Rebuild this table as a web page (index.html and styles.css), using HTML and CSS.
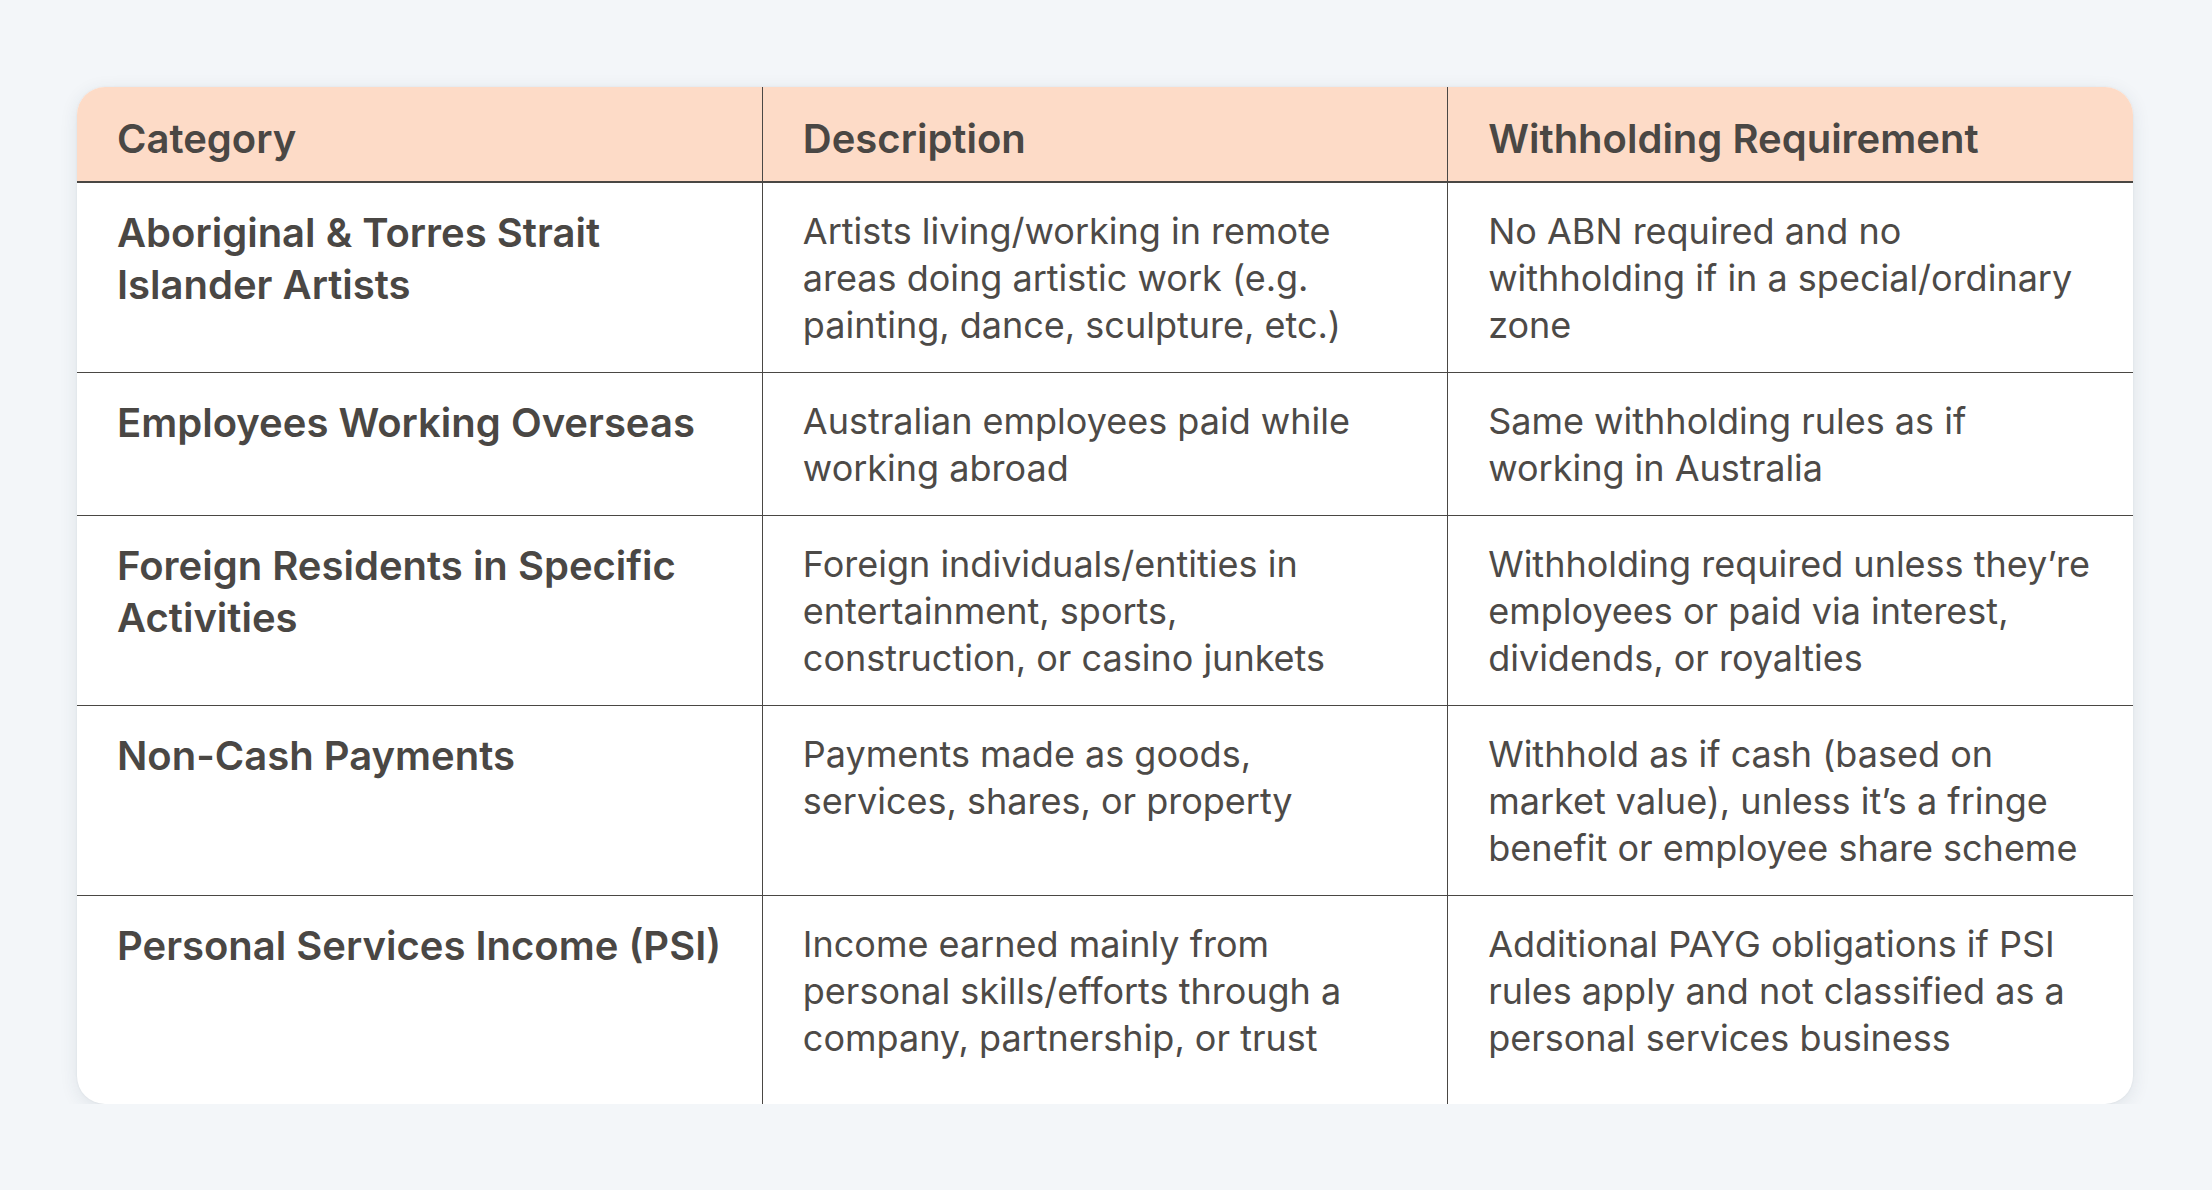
FILE: index.html
```html
<!DOCTYPE html>
<html>
<head>
<meta charset="utf-8">
<link rel="stylesheet" href="styles.css">
</head>
<body>
<div class="page">
  <div class="card">
    <table class="tbl">
      <thead>
        <tr><th>Category</th><th>Description</th><th>Withholding Requirement</th></tr>
      </thead>
      <tbody>
        <tr>
          <td class="cat">Aboriginal &amp; Torres Strait Islander Artists</td>
          <td>Artists living/working in remote areas doing artistic work (e.g. painting, dance, sculpture, etc.)</td>
          <td>No ABN required and no withholding if in a special/ordinary zone</td>
        </tr>
        <tr>
          <td class="cat">Employees Working Overseas</td>
          <td>Australian employees paid while working abroad</td>
          <td>Same withholding rules as if working in Australia</td>
        </tr>
        <tr>
          <td class="cat">Foreign Residents in Specific Activities</td>
          <td>Foreign individuals/entities in entertainment, sports, construction, or casino junkets</td>
          <td>Withholding required unless they’re employees or paid via interest, dividends, or royalties</td>
        </tr>
        <tr>
          <td class="cat">Non-Cash Payments</td>
          <td>Payments made as goods, services, shares, or property</td>
          <td>Withhold as if cash (based on market value), unless it’s a fringe benefit or employee share scheme</td>
        </tr>
        <tr class="last">
          <td class="cat">Personal Services Income (PSI)</td>
          <td>Income earned mainly from personal skills/efforts through a company, partnership, or trust</td>
          <td>Additional PAYG obligations if PSI rules apply and not classified as a personal services business</td>
        </tr>
      </tbody>
    </table>
  </div>
</div>
</body>
</html>
```
FILE: styles.css
```css
html, body {
  margin: 0;
  padding: 0;
  background: #f3f6f9;
}
body {
  font-family: Inter, "Noto Sans", sans-serif;
  color: #4a4744;
}
.page {
  padding: 87px 79px 0 77px;
}
.card {
  width: 2056px;
  background: #ffffff;
  border-radius: 28px;
  overflow: hidden;
  box-shadow: 0 4px 18px rgba(40, 60, 80, 0.10), 0 0 2px rgba(40, 60, 80, 0.08);
}
.tbl {
  width: 100%;
  border-collapse: collapse;
  table-layout: fixed;
}
.tbl th, .tbl td {
  text-align: left;
  vertical-align: top;
  padding: 24px 40px 24px 40px;
  border-left: 1.5px solid #4a4744;
}
.tbl th:first-child, .tbl td:first-child {
  border-left: none;
}
.tbl th {
  background: #fddbc7;
  font-size: 40px;
  line-height: 52px;
  font-weight: 600;
  padding-top: 26px;
  padding-bottom: 16px;
  color: #4a4744;
  border-bottom: 2px solid #4a4744;
}
.tbl td {
  font-size: 36px;
  line-height: 47px;
  font-weight: 400;
  color: #4d4a47;
  padding-top: 25px;
  padding-bottom: 23px;
  border-top: 1.5px solid #4a4744;
}
.tbl tbody tr:first-child td {
  border-top: none;
}
.tbl td.cat {
  font-size: 40px;
  line-height: 52px;
  font-weight: 600;
  color: #4a4744;
  padding-top: 24px;
}
.tbl tr.last td {
  padding-bottom: 42px;
}
```
